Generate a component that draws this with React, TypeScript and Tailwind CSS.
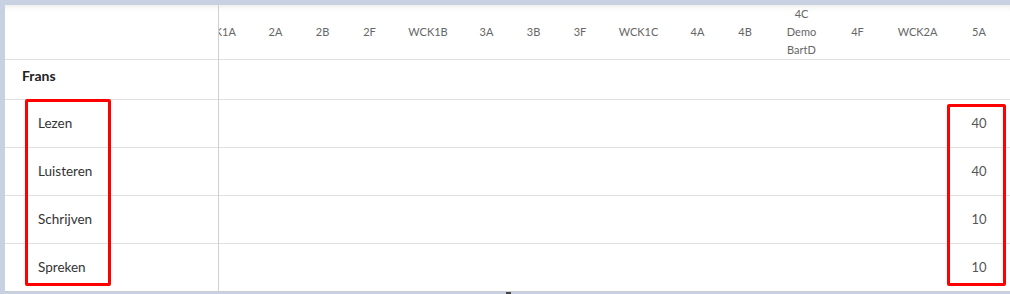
import React from "react";

const cols: { label: string; w: number }[] = [
  { label: "WCK1A", w: 72 },
  { label: "2A", w: 47 },
  { label: "2B", w: 47 },
  { label: "2F", w: 47 },
  { label: "WCK1B", w: 70 },
  { label: "3A", w: 47 },
  { label: "3B", w: 47 },
  { label: "3F", w: 46 },
  { label: "WCK1C", w: 71 },
  { label: "4A", w: 47 },
  { label: "4B", w: 48 },
  { label: "4C Demo BartD", w: 65 },
  { label: "4F", w: 47 },
  { label: "WCK2A", w: 73 },
  { label: "5A", w: 50 },
];

const rows: { label: string; value: string }[] = [
  { label: "Lezen", value: "40" },
  { label: "Luisteren", value: "40" },
  { label: "Schrijven", value: "10" },
  { label: "Spreken", value: "10" },
];

export default function App() {
  return (
    <div
      className="relative w-[1010px] h-[294px] overflow-hidden bg-[#c8d1e2] pt-[5px] pl-[5px]"
      style={{ fontFamily: "Lato, 'Open Sans', sans-serif" }}
    >
      <div className="flex bg-white shadow-[inset_0_7px_6px_-6px_rgba(0,0,0,0.10)]">
        {/* left sticky column */}
        <div className="w-[214px] shrink-0 border-r border-[#cfcfcf] flex flex-col">
          <div className="h-[55px] border-b border-[#e0e0e0]" />
          <div className="h-[40px] border-b border-[#e0e0e0] flex items-center pl-[17px] pb-[8px] text-[14px] font-bold text-[#222]">
            Frans
          </div>
          {rows.map((r, i) => (
            <div
              key={r.label}
              className={
                i === rows.length - 1
                  ? "h-[48px] border-b border-[#c9cdd3] flex items-center pl-[33px] text-[13.5px] text-[#333]"
                  : "h-[48px] border-b border-[#e0e0e0] flex items-center pl-[33px] text-[13.5px] text-[#333]"
              }
            >
              {r.label}
            </div>
          ))}
        </div>
        {/* scrolled data area */}
        <div className="flex-1 overflow-hidden">
          <div className="ml-[-39px] flex flex-col w-max min-w-[calc(100%+39px)]">
            <div className="h-[55px] border-b border-[#e0e0e0] flex">
              {cols.map((c) => (
                <div
                  key={c.label}
                  className="shrink-0 flex items-center justify-center px-[16px] text-center text-[11px] leading-[18px] text-[#666]"
                  style={{ width: c.w }}
                >
                  {c.label}
                </div>
              ))}
            </div>
            <div className="h-[40px] border-b border-[#e0e0e0]" />
            {rows.map((r, i) => (
              <div
                key={r.label}
                className={
                  i === rows.length - 1
                    ? "h-[48px] border-b border-[#c9cdd3] flex"
                    : "h-[48px] border-b border-[#e0e0e0] flex"
                }
              >
                {cols.map((c) => (
                  <div
                    key={c.label}
                    className="shrink-0 flex items-center justify-center text-[13px] text-[#555]"
                    style={{ width: c.w }}
                  >
                    {c.label === "5A" ? r.value : ""}
                  </div>
                ))}
              </div>
            ))}
          </div>
        </div>
      </div>

      {/* annotation boxes */}
      <div className="absolute left-[25px] top-[99px] w-[86px] h-[187px] border-[3px] border-[#ff0000] rounded-[2px]" />
      <div className="absolute left-[947px] top-[104px] w-[59px] h-[182px] border-[3px] border-[#ff0000] rounded-[2px]" />
      {/* scrollbar fragment */}
      <div className="absolute left-[506px] top-[292px] w-[5px] h-[2px] bg-[#444]" />
    </div>
  );
}
